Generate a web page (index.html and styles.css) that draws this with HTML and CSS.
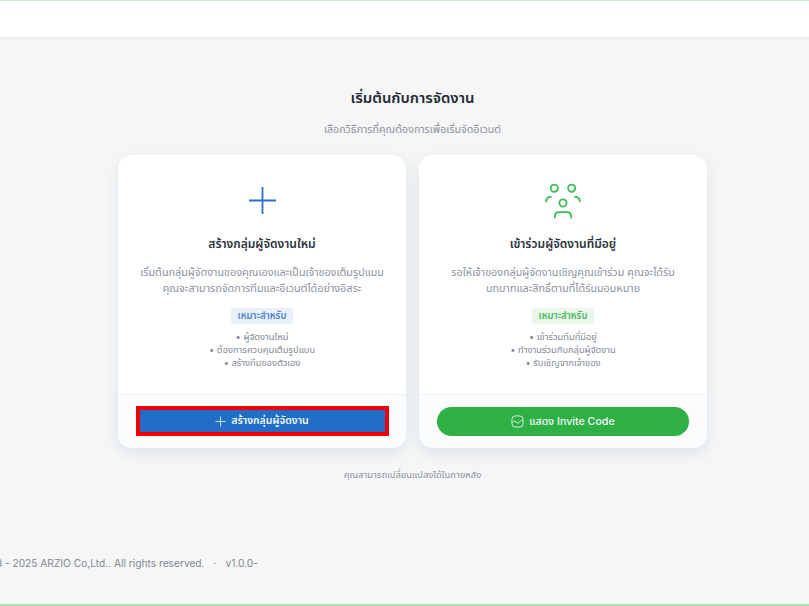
FILE: index.html
```html
<!DOCTYPE html>
<html lang="th">
<head>
<meta charset="utf-8">
<title>เริ่มต้นกับการจัดงาน</title>
<link rel="stylesheet" href="styles.css">
</head>
<body>
<header class="topbar"></header>
<main class="main">
  <h1 class="title">เริ่มต้นกับการจัดงาน</h1>
  <p class="subtitle">เลือกวิธีการที่คุณต้องการเพื่อเริ่มจัดอีเวนต์</p>
  <div class="cards">
    <section class="card">
      <div class="card-body">
        <svg class="icon icon-blue" viewBox="0 0 27 27" aria-hidden="true"><path d="M13.500 0v27M0 13.500h27"/></svg>
        <h2 class="card-title">สร้างกลุ่มผู้จัดงานใหม่</h2>
        <p class="card-text">เริ่มต้นกลุ่มผู้จัดงานของคุณเองและเป็นเจ้าของเต็มรูปแบบ<br>คุณจะสามารถจัดการทีมและอีเวนต์ได้อย่างอิสระ</p>
        <span class="badge badge-blue">เหมาะสำหรับ</span>
        <ul class="list">
          <li>• ผู้จัดงานใหม่</li>
          <li>• ต้องการควบคุมเต็มรูปแบบ</li>
          <li>• สร้างทีมของตัวเอง</li>
        </ul>
      </div>
      <div class="card-foot">
        <button class="btn btn-blue" type="button">
          <svg class="btn-icon" viewBox="0 0 12 12" aria-hidden="true"><path d="M6 .5v11M.5 6h11"/></svg>
          สร้างกลุ่มผู้จัดงาน
        </button>
      </div>
    </section>
    <section class="card">
      <div class="card-body">
        <svg class="icon icon-green" viewBox="0 0 36 36" aria-hidden="true">
          <circle cx="9.300" cy="5.200" r="3.600"/>
          <circle cx="26.700" cy="5.200" r="3.600"/>
          <circle cx="18" cy="20" r="3.600"/>
          <path d="M1.200 18.500c0-3 2-4.600 4.800-4.600"/>
          <path d="M34.800 18.500c0-3-2-4.600-4.800-4.600"/>
          <path d="M9.800 34.500v-1c0-2.800 2-4.400 4.600-4.400h7.200c2.600 0 4.600 1.600 4.600 4.400v1"/>
        </svg>
        <h2 class="card-title">เข้าร่วมผู้จัดงานที่มีอยู่</h2>
        <p class="card-text">รอให้เจ้าของกลุ่มผู้จัดงานเชิญคุณเข้าร่วม คุณจะได้รับ<br>บทบาทและสิทธิ์ตามที่ได้รับมอบหมาย</p>
        <span class="badge badge-green">เหมาะสำหรับ</span>
        <ul class="list">
          <li>• เข้าร่วมทีมที่มีอยู่</li>
          <li>• ทำงานร่วมกับกลุ่มผู้จัดงาน</li>
          <li>• รับเชิญจากเจ้าของ</li>
        </ul>
      </div>
      <div class="card-foot">
        <button class="btn btn-green" type="button">
          <svg class="btn-icon-img" viewBox="0 0 14 14" aria-hidden="true"><rect x="1" y="1" width="12" height="12" rx="3.500"/><path d="M1.200 8.500c1.500-2.300 3-2.300 4.300-.8 1.300 1.500 2.800 1.500 4-.7.800-1.300 2.200-1.400 3.300-.5"/></svg>
          แสดง Invite Code
        </button>
      </div>
    </section>
  </div>
  <p class="note">คุณสามารถเปลี่ยนแปลงได้ในภายหลัง</p>
</main>
<footer class="footer"><span>© 2023 - 2025 ARZIO Co,Ltd.. All rights reserved.</span><span>·</span><span>v1.0.0-</span></footer>
</body>
</html>
```
FILE: styles.css
```css
* { box-sizing: border-box; }
html, body { margin: 0; height: 100%; }
body {
  width: 809px;
  height: 606px;
  overflow: hidden;
  display: flex;
  flex-direction: column;
  background: #f6f6f6;
  font-family: Inter, "Noto Sans", "Noto Sans Thai", sans-serif;
  border-bottom: 2px solid #a6e3b0;
}
.topbar {
  height: 39px;
  flex: none;
  background: #fff;
  border-top: 1px solid #c8ecd0;
  border-bottom: 2px solid #ebeded;
}
.main {
  flex: 1;
  display: flex;
  flex-direction: column;
  align-items: center;
  padding-left: 16px;
}
.title {
  margin: 49px 0 0;
  font-size: 14.900px;
  line-height: 20px;
  font-weight: 600;
  color: #1f2937;
}
.subtitle {
  margin: 13px 0 0;
  font-size: 10.670px;
  line-height: 18px;
  color: #8a929e;
}
.cards {
  margin-top: 16px;
  display: flex;
  gap: 13px;
}
.card {
  width: 288px;
  height: 293px;
  display: flex;
  flex-direction: column;
  background: #fff;
  border-radius: 14px;
  overflow: hidden;
  box-shadow: 0 5px 14px rgba(160, 190, 210, .3);
}
.card-body {
  flex: 1;
  display: flex;
  flex-direction: column;
  align-items: center;
  padding-top: 32px;
  text-align: center;
}
.icon { width: 27px; height: 27px; fill: none; stroke-width: 1.800; flex: none; }
.icon-blue { stroke: #2a70c9; }
.icon-green { width: 36px; height: 36px; margin-top: -4px; margin-bottom: -5px; stroke: #3ebc55; stroke-linecap: round; }
.card-title {
  margin: 22px 0 0;
  font-size: 12px;
  line-height: 16px;
  font-weight: 600;
  color: #2b3240;
}
.card-text {
  margin: 13px 0 0;
  font-size: 10.800px;
  line-height: 16px;
  color: #8a929e;
}
.badge {
  margin-top: 11px;
  padding: 0 6.500px;
  height: 16px;
  line-height: 16px;
  font-size: 9.600px;
  font-weight: 600;
  border-radius: 3px;
}
.badge-blue { background: #e8f0fa; color: #4f86cf; }
.badge-green { background: #e9f7ec; color: #4bb862; }
.list {
  list-style: none;
  margin: 6px 0 0;
  padding: 0;
  font-size: 9.300px;
  line-height: 13px;
  color: #7f8794;
}
.card-foot {
  height: 54px;
  flex: none;
  display: flex;
  justify-content: center;
  padding-top: 12px;
  background: #fafcfd;
  border-top: 1px solid #eceff1;
}
.btn {
  display: flex;
  align-items: center;
  justify-content: center;
  gap: 5px;
  border: 0;
  font-family: inherit;
  font-size: 10.500px;
  font-weight: 600;
  color: #f2f7fd;
}
.btn-blue {
  width: 253px;
  height: 30px;
  background: #226dc5;
  border: 4px solid #f00000;
  margin-top: -1px;
}
.btn-green {
  width: 252px;
  height: 29px;
  border-radius: 15px;
  background: #2fb044;
  font-size: 10.670px;
  font-weight: 500;
}
.btn-icon { width: 11px; height: 11px; fill: none; stroke: #dbe8f7; stroke-width: 1; }
.btn-icon-img { width: 13px; height: 13px; fill: none; stroke: #eef9f0; stroke-width: .9; }
.note {
  margin: 20px 0 0;
  font-size: 9.400px;
  line-height: 14px;
  color: #8a929e;
}
.footer {
  flex: none;
  width: 258px;
  height: 48px;
  display: flex;
  justify-content: flex-end;
  gap: 9px;
  white-space: nowrap;
  font-size: 10.200px;
  line-height: 14px;
  color: #7f8794;
}
```
